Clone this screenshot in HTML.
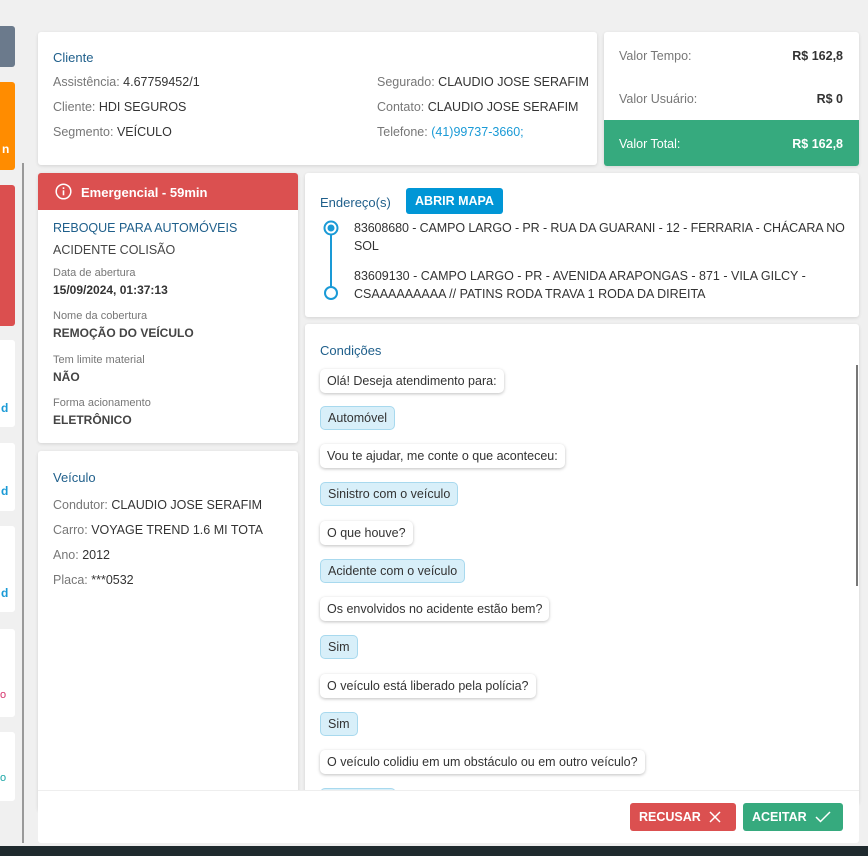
<!DOCTYPE html>
<html><head><meta charset="utf-8"><style>
*{box-sizing:border-box;margin:0;padding:0}
body{width:868px;height:856px;background:#f0f0f0;font-family:"Liberation Sans",sans-serif;font-size:12.5px;color:#333;position:relative;overflow:hidden}
.abs{position:absolute}
.card{position:absolute;background:#fff;border-radius:3px;box-shadow:0 1px 3px rgba(0,0,0,.12)}
.t{color:#1f5f8b;font-size:13px}
.g{color:#777}
.l{position:absolute;white-space:nowrap}
.b{padding:5px 7px;border-radius:5px;background:#fff;box-shadow:0 1px 3px rgba(0,0,0,.25);position:absolute;left:320px;white-space:nowrap;font-size:12.5px;color:#333}
.b.s{background:#d8eff9;border:1px solid #a8d9ee;box-shadow:none;padding:4px 7px}
</style></head><body>
<div class="abs" style="left:0;top:26px;width:15px;height:41px;background:#6b7a8c;border-radius:0 3px 3px 0"></div>
<div class="abs" style="left:0;top:82px;width:15px;height:88px;background:#ff8c00;border-radius:0 3px 3px 0;color:#fff;font-weight:bold;font-size:12px;padding:60px 0 0 2px">n</div>
<div class="abs" style="left:0;top:185px;width:15px;height:141px;background:#db4f4f;border-radius:0 3px 3px 0"></div>
<div class="abs" style="left:0;top:340px;width:15px;height:87px;background:#fff;border-radius:0 3px 3px 0;color:#1a9ad6;font-weight:bold;font-size:12px;padding:61px 0 0 1px">d</div>
<div class="abs" style="left:0;top:443px;width:15px;height:68px;background:#fff;border-radius:0 3px 3px 0;color:#1a9ad6;font-weight:bold;font-size:12px;padding:41px 0 0 1px">d</div>
<div class="abs" style="left:0;top:526px;width:15px;height:86px;background:#fff;border-radius:0 3px 3px 0;color:#1a9ad6;font-weight:bold;font-size:12px;padding:60px 0 0 1px">d</div>
<div class="abs" style="left:0;top:629px;width:15px;height:88px;background:#fff;border-radius:0 3px 3px 0;color:#d6336c;font-size:11px;padding:60px 0 0 0">o</div>
<div class="abs" style="left:0;top:732px;width:15px;height:69px;background:#fff;border-radius:0 3px 3px 0;color:#1aa6a6;font-size:11px;padding:40px 0 0 0">o</div>
<div class="abs" style="left:22px;top:163px;width:2px;height:680px;background:#999"></div>

<div class="card" style="left:38px;top:32px;width:559px;height:133px">
<div class="l t" style="left:15px;top:18px">Cliente</div>
<div class="l" style="left:15px;top:43px"><span class="g">Assistência:</span> 4.67759452/1</div>
<div class="l" style="left:15px;top:68px"><span class="g">Cliente:</span> HDI SEGUROS</div>
<div class="l" style="left:15px;top:93px"><span class="g">Segmento:</span> VEÍCULO</div>
<div class="l" style="left:339px;top:43px"><span class="g">Segurado:</span> CLAUDIO JOSE SERAFIM</div>
<div class="l" style="left:339px;top:68px"><span class="g">Contato:</span> CLAUDIO JOSE SERAFIM</div>
<div class="l" style="left:339px;top:93px"><span class="g">Telefone:</span> <span style="color:#1a9ad6">(41)99737-3660;</span></div>
</div>
<div class="card" style="left:604px;top:32px;width:255px;height:134px;overflow:hidden">
<div class="l g" style="left:15px;top:17px">Valor Tempo:</div><div class="l" style="right:16px;top:17px;font-weight:bold">R$ 162,8</div>
<div class="l g" style="left:15px;top:60px">Valor Usuário:</div><div class="l" style="right:16px;top:60px;font-weight:bold">R$ 0</div>
<div class="abs" style="left:0;top:88px;width:255px;height:46px;background:#36aa7e;color:#fff">
<div class="l" style="left:15px;top:17px">Valor Total:</div><div class="l" style="right:16px;top:17px;font-weight:bold">R$ 162,8</div></div>
</div>
<div class="card" style="left:38px;top:173px;width:260px;height:270px;overflow:hidden">
<div class="abs" style="left:0;top:0;width:260px;height:37px;background:#db5050;color:#fff;font-weight:bold;font-size:13px">
<svg class="abs" style="left:17px;top:10px" width="17" height="17" viewBox="0 0 17 17"><circle cx="8.5" cy="8.5" r="7.3" fill="none" stroke="#fff" stroke-width="1.5"/><rect x="7.7" y="7.3" width="1.6" height="5" fill="#fff"/><rect x="7.7" y="4.3" width="1.6" height="1.7" fill="#fff"/></svg>
<div class="l" style="left:43px;top:12px">Emergencial - 59min</div></div>
<div class="l t" style="left:15px;top:48px;font-size:12.5px">REBOQUE PARA AUTOMÓVEIS</div>
<div class="l" style="left:15px;top:70px;color:#444">ACIDENTE COLISÃO</div>
<div class="l g" style="left:15px;top:94px;font-size:11px">Data de abertura</div>
<div class="l" style="left:15px;top:110px;font-weight:bold;font-size:12px">15/09/2024, 01:37:13</div>
<div class="l g" style="left:15px;top:137px;font-size:11px">Nome da cobertura</div>
<div class="l" style="left:15px;top:153px;font-weight:bold;font-size:12px;color:#444">REMOÇÃO DO VEÍCULO</div>
<div class="l g" style="left:15px;top:181px;font-size:11px">Tem limite material</div>
<div class="l" style="left:15px;top:197px;font-weight:bold;font-size:12px;color:#444">NÃO</div>
<div class="l g" style="left:15px;top:224px;font-size:11px">Forma acionamento</div>
<div class="l" style="left:15px;top:240px;font-weight:bold;font-size:12px;color:#444">ELETRÔNICO</div>
</div>
<div class="card" style="left:38px;top:451px;width:260px;height:360px">
<div class="l t" style="left:15px;top:19px">Veículo</div>
<div class="l" style="left:15px;top:47px"><span class="g">Condutor:</span> CLAUDIO JOSE SERAFIM</div>
<div class="l" style="left:15px;top:72px"><span class="g">Carro:</span> VOYAGE TREND 1.6 MI TOTA</div>
<div class="l" style="left:15px;top:97px"><span class="g">Ano:</span> 2012</div>
<div class="l" style="left:15px;top:122px"><span class="g">Placa:</span> ***0532</div>
</div>
<div class="card" style="left:305px;top:173px;width:554px;height:144px">
<div class="l t" style="left:15px;top:22px">Endereço(s)</div>
<div class="abs" style="left:101px;top:15px;width:97px;height:26px;background:#0096d6;border-radius:3px;color:#fff;font-weight:bold;font-size:12.5px;text-align:center;line-height:26px">ABRIR MAPA</div>
<svg class="abs" style="left:16px;top:45px" width="20" height="85"><line x1="10" y1="10" x2="10" y2="75" stroke="#1a9ad6" stroke-width="2"/><circle cx="10" cy="10" r="6.5" fill="#fff" stroke="#1a9ad6" stroke-width="2"/><circle cx="10" cy="10" r="3.5" fill="#1a9ad6"/><circle cx="10" cy="75" r="6" fill="#fff" stroke="#1a9ad6" stroke-width="2"/></svg>
<div class="abs" style="left:49px;top:46px;width:500px;line-height:18px;letter-spacing:-0.1px">83608680 - CAMPO LARGO - PR - RUA DA GUARANI - 12 - FERRARIA - CHÁCARA NO SOL</div>
<div class="abs" style="left:49px;top:94px;width:480px;line-height:18px">83609130 - CAMPO LARGO - PR - AVENIDA ARAPONGAS - 871 - VILA GILCY - CSAAAAAAAAA // PATINS RODA TRAVA 1 RODA DA DIREITA</div>
</div>
<div class="card" style="left:305px;top:324px;width:554px;height:480px;overflow:hidden"></div>
<div class="l t" style="left:320px;top:343px">Condições</div>
<div class="abs" style="left:856px;top:365px;width:2px;height:221px;background:#777"></div>
<div class="b" style="top:369px">Olá! Deseja atendimento para:</div>
<div class="b s" style="top:406px">Automóvel</div>
<div class="b" style="top:444px">Vou te ajudar, me conte o que aconteceu:</div>
<div class="b s" style="top:482px">Sinistro com o veículo</div>
<div class="b" style="top:521px">O que houve?</div>
<div class="b s" style="top:559px">Acidente com o veículo</div>
<div class="b" style="top:597px">Os envolvidos no acidente estão bem?</div>
<div class="b s" style="top:635px">Sim</div>
<div class="b" style="top:674px">O veículo está liberado pela polícia?</div>
<div class="b s" style="top:712px">Sim</div>
<div class="b" style="top:750px">O veículo colidiu em um obstáculo ou em outro veículo?</div>
<div class="b s" style="top:788px;width:76px;height:20px"></div>
<div class="abs" style="left:38px;top:790px;width:821px;height:53px;background:#fff;border-top:1px solid #eee;border-radius:0 0 3px 3px"></div>
<div class="abs" style="left:630px;top:803px;width:106px;height:28px;background:#db5050;border-radius:3px;color:#fff;font-weight:bold;font-size:12.5px;line-height:28px;padding-left:9px">RECUSAR
<svg class="abs" style="left:79px;top:8px" width="12" height="12"><path d="M1 1L11 11M11 1L1 11" stroke="#fff" stroke-width="1.5"/></svg></div>
<div class="abs" style="left:743px;top:803px;width:100px;height:28px;background:#36aa7e;border-radius:3px;color:#fff;font-weight:bold;font-size:12.5px;line-height:28px;padding-left:9px">ACEITAR
<svg class="abs" style="left:72px;top:8px" width="16" height="12"><path d="M1 6L5.5 10.5L15 1" fill="none" stroke="#fff" stroke-width="1.5"/></svg></div>
<div class="abs" style="left:0;top:846px;width:868px;height:10px;background:#1f2a2e"></div>
</body></html>
